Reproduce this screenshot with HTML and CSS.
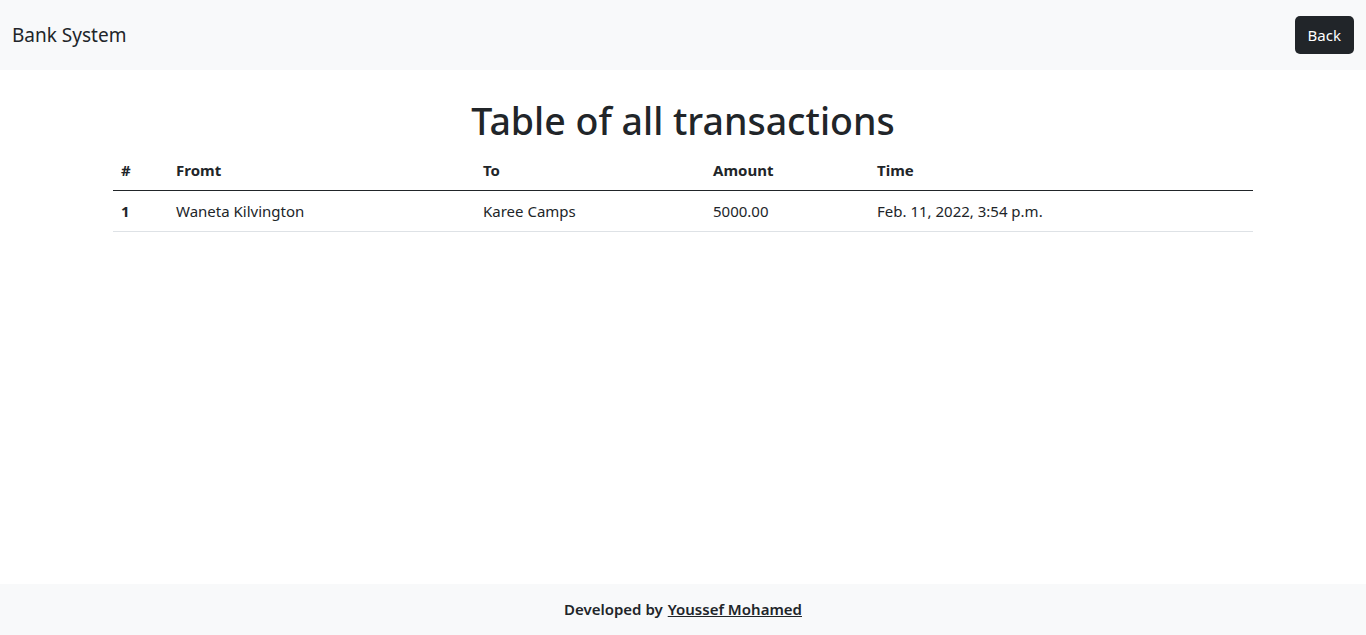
FILE: index.html
```html
<!DOCTYPE html>
<html lang="en">
<head>
    <meta charset="UTF-8">
    <meta name="viewport" content="width=device-width, initial-scale=1.0">
    <title>Bank System</title>
    <link rel="stylesheet" href="styles.css">
</head>
<body>
    <!-- Navbar -->
    <nav class="navbar">
        <a class="brand" href="#">Bank System</a>
        <a class="btn-dark" href="#">Back</a>
    </nav>

    <!-- Transactions -->
    <main class="content">
        <h1 class="title">Table of all transactions</h1>
        <table class="table">
            <thead>
                <tr>
                    <th class="col-num">#</th>
                    <th class="col-from">Fromt</th>
                    <th class="col-to">To</th>
                    <th class="col-amount">Amount</th>
                    <th>Time</th>
                </tr>
            </thead>
            <tbody>
                <tr>
                    <th>1</th>
                    <td>Waneta Kilvington</td>
                    <td>Karee Camps</td>
                    <td>5000.00</td>
                    <td>Feb. 11, 2022, 3:54 p.m.</td>
                </tr>
            </tbody>
        </table>
    </main>

    <!-- Footer -->
    <footer class="footer">
        Developed by <a href="#">Youssef Mohamed</a>
    </footer>
</body>
</html>
```

FILE: styles.css
```css
/* Basic Styling */
body {
    margin: 0;
    min-height: 100vh;
    display: flex;
    flex-direction: column;
    font-family: "Noto Sans", "Open Sans", sans-serif;
    font-size: 16px;
    line-height: 1.5;
    color: #212529;
    background-color: #fff;
}

/* Navbar */
.navbar {
    height: 70px;
    box-sizing: border-box;
    padding: 0 12px;
    display: flex;
    align-items: center;
    justify-content: space-between;
    background-color: #f8f9fa;
}

.brand {
    font-size: 19px;
    color: #212529;
    text-decoration: none;
}

.btn-dark {
    display: inline-block;
    padding: 6px 13px;
    font-size: 15px;
    line-height: 26px;
    color: #fff;
    background-color: #212529;
    border-radius: 5px;
    text-decoration: none;
}

/* Content */
.content {
    flex: 1;
}

.title {
    margin: 28px 0 7px;
    text-align: center;
    font-size: 37.5px;
    font-weight: 500;
    line-height: 1.2;
}

.table {
    width: 1140px;
    margin: 0 auto;
    border-collapse: collapse;
    font-size: 15px;
}

.table th,
.table td {
    padding: 8px;
    text-align: left;
    line-height: 24px;
    border-bottom: 1px solid #dee2e6;
}

.table th { font-weight: 700; }

.table thead th {
    border-bottom: 1px solid #212529;
}

.col-num { width: 39px; }
.col-from { width: 291px; }
.col-to { width: 214px; }
.col-amount { width: 148px; }

/* Footer */
.footer {
    height: 51px;
    display: flex;
    align-items: center;
    justify-content: center;
    gap: 5px;
    background-color: #f8f9fa;
    font-size: 15px;
    font-weight: 600;
}

.footer a {
    color: #212529;
}
```
